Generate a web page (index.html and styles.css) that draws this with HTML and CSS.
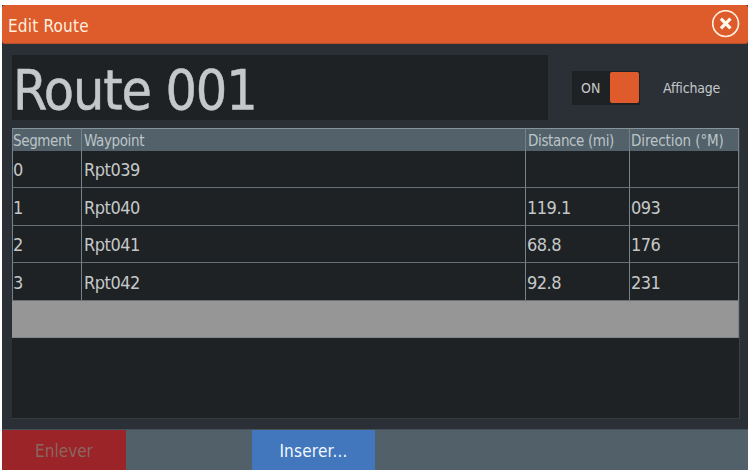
FILE: index.html
```html
<!DOCTYPE html>
<html lang="fr">
<head>
<meta charset="utf-8">
<title>Edit Route</title>
<link rel="stylesheet" href="styles.css">
</head>
<body>
<main class="dialog">
  <header class="titlebar">
    <h1 class="title">Edit Route</h1>
    <button class="close" aria-label="Close">
      <svg viewBox="0 0 28 28" width="28" height="28">
        <circle cx="13.6" cy="13.6" r="12.9" fill="none" stroke="#fff0de" stroke-width="1.7"/>
        <path d="M8.9 8.7l9.6 9.6M18.5 8.7l-9.6 9.6" fill="none" stroke="#fffaf0" stroke-width="3.2"/>
      </svg>
    </button>
  </header>
  <section class="route">
    <div class="name">Route 001</div>
    <div class="toggle"><span class="state">ON</span><span class="knob"></span></div>
    <span class="toggle-label">Affichage</span>
  </section>
  <section class="list">
    <table>
      <colgroup><col class="c-seg"><col class="c-way"><col class="c-dist"><col class="c-dir"></colgroup>
      <thead><tr><th>Segment</th><th>Waypoint</th><th>Distance (mi)</th><th class="h-dir">Direction (°M)</th></tr></thead>
      <tbody>
        <tr><td>0</td><td>Rpt039</td><td></td><td></td></tr>
        <tr class="tall"><td>1</td><td>Rpt040</td><td>119.1</td><td>093</td></tr>
        <tr><td>2</td><td>Rpt041</td><td>68.8</td><td>176</td></tr>
        <tr class="tall"><td>3</td><td>Rpt042</td><td>92.8</td><td>231</td></tr>
        <tr class="selected"><td></td><td></td><td></td><td></td></tr>
      </tbody>
    </table>
  </section>
  <footer class="actions">
    <button class="remove">Enlever</button>
    <button class="insert">Inserer...</button>
  </footer>
</main>
</body>
</html>
```
FILE: styles.css
```css
* { box-sizing: border-box; }
body {
  margin: 0;
  padding: 5px 0 0 2px;
  height: 470px;
  overflow: hidden;
  background: #fff;
  font-family: "DejaVu Sans Condensed", "DejaVu Sans", sans-serif;
  font-stretch: condensed;
  color: #c5c8c9;
}
button { border: 0; padding: 0; margin: 0; background: none; font: inherit; color: inherit; }
.dialog {
  height: 465px;
  display: flex;
  flex-direction: column;
  background: #2b3037;
}
.titlebar {
  height: 39px;
  flex: none;
  display: flex;
  align-items: center;
  justify-content: space-between;
  padding: 0 8px 0 6px;
  background: #de5b2c;
  border-radius: 3px;
  border-bottom: 1px solid #b54f2e;
}
.title { margin: 3px 0 0; font-size: 17px; font-weight: 400; letter-spacing: .2px; color: #fff0df; }
.close { width: 28px; height: 28px; margin-top: -1px; }
.close svg { display: block; }
.route {
  height: 84px;
  flex: none;
  display: flex;
  align-items: center;
  padding: 3px 0 0 10px;
}
.name {
  width: 536px;
  height: 65px;
  padding-left: 1px;
  background: #1e2224;
  font-size: 55px;
  line-height: 70px;
  letter-spacing: -1.1px;
  white-space: nowrap;
  -webkit-text-stroke: .5px #c5c8c9;
}
.toggle {
  width: 68px;
  height: 34px;
  margin-left: 24px;
  padding: 1px;
  display: flex;
  align-items: center;
  justify-content: space-between;
  background: #1e2224;
}
.state { padding-left: 8px; font-size: 14px; }
.knob { width: 29px; height: 31px; background: #df5b2c; border-radius: 2px; }
.toggle-label { margin-left: 23px; font-size: 14px; letter-spacing: -.2px; }
.list {
  height: 291px;
  flex: none;
  margin: 0 8px 0 10px;
  background: #1e2224;
  border-right: 1px solid #3b4348;
  border-bottom: 1px solid #353c40;
}
table { width: 727px; table-layout: fixed; border-collapse: separate; border-spacing: 0; border-right: 1px solid #788188; }
.c-seg { width: 69px; }
.c-way { width: 444px; }
.c-dist { width: 104px; }
th, td { padding: 0 0 0 2px; text-align: left; font-weight: 400; white-space: nowrap; border-left: 1px solid #788188; }
th:first-child, td:first-child { padding-left: 0; }
th { height: 23px; padding-top: 1px; font-size: 15px; line-height: 20px; letter-spacing: -.37px; background: #52616a; border-top: 1px solid #87949b; color: #bcc4c8; }
.h-dir { padding-left: 1px; letter-spacing: -.1px; }
td { height: 37px; padding-top: 2px; font-size: 18px; line-height: 34px; letter-spacing: -.5px; border-bottom: 1px solid #687076; }
td:nth-child(n+3) { padding-left: 1px; }
.tall td { height: 38px; }
.selected td { background: #969696; border-left-color: #949494; border-bottom-color: #7d8588; }
.actions {
  height: 41px;
  margin-top: 10px;
  flex: none;
  display: flex;
  gap: 126px;
  background: #52606a;
  border-top: 1px solid #44515a;
  font-size: 17px;
}
.remove { width: 124px; padding-top: 2px; background: #9b2428; color: #8b6661; }
.insert { width: 123px; padding-top: 2px; background: #4277bd; color: #f2f8ff; letter-spacing: .2px; }
```
